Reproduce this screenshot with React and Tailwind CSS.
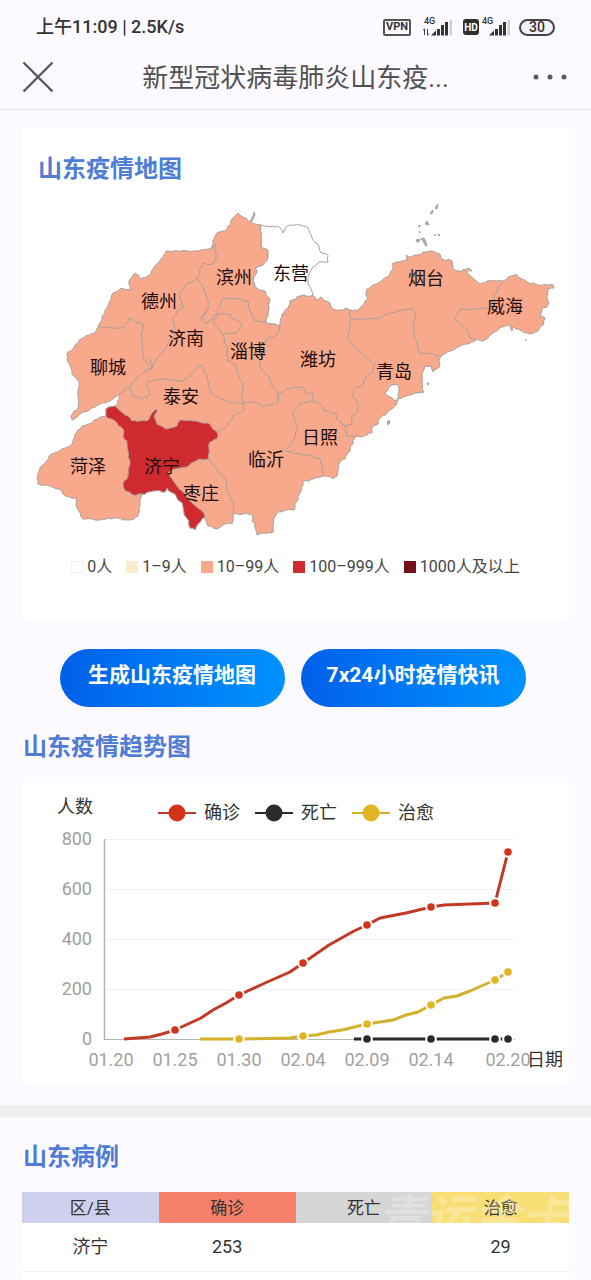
import React from "react";

const FONT = "font-['Roboto','Noto_Sans_CJK_SC',sans-serif]";

/* ---------- map data ---------- */

const PROVINCE =
  "238,212 241,215 246,217 249,221 252,217 254,211 255,213 251,222 261,224 262,247 268,249 268,256 263,264 255,267 257,272 253,280 257,287 265,290 270,298 269,307 268,315 266,321 272,323 280,324 282,313 288,307 290,300 300,295 313,294 316,299 321,296 325,300 330,302 333,308 343,309 346,307 350,309 358,309 364,303 368,298 366,294 367,288 380,281 390,273 393,268 392,263 400,261 407,258 406,254 409,256 417,254 423,251 435,251 440,253 442,258 452,260 453,268 460,271 468,267 472,270 467,271 475,279 480,283 487,280 503,280 508,276 516,273 520,277 527,281 535,283 548,284 553,284 554,287 548,288 547,295 549,302 547,306 542,307 540,315 545,317 544,323 538,330 530,333 522,330 516,328 513,326 512,330 510,324 502,326 492,333 483,340 477,338 468,343 460,345 450,350 441,355 439,360 440,365 433,371 431,365 425,365 422,373 422,380 424,391 415,392 403,396 398,398 397,403 392,408 387,412 380,417 378,423 373,425 372,432 367,434 362,436 356,435 353,443 348,452 345,458 340,461 337,475 333,478 323,475 303,481 300,492 295,503 295,508 287,509 278,511 274,517 273,527 272,532 263,532 257,534 255,523 252,520 252,513 243,513 233,513 232,523 225,523 217,528 208,525 205,516 198,523 195,529 190,527 189,520 184,513 183,505 175,493 167,487 165,491 153,490 142,493 139,507 138,515 130,519 122,519 117,517 100,519 83,518 77,507 76,497 65,495 59,488 50,485 38,483 37,478 40,467 52,453 62,448 70,445 75,433 82,425 92,422 100,416 106,415 106,408 115,405 118,403 119,393 113,398 100,403 80,413 72,419 71,415 78,407 78,393 79,380 72,373 68,361 67,353 78,342 83,337 95,332 99,323 107,307 113,292 120,288 131,288 129,280 135,272 138,274 141,278 148,275 157,263 166,250 177,250 193,250 208,248 210,248 217,232 227,229 232,218";

const DONGYING =
  "261,224 262,247 268,249 268,256 263,264 255,267 257,272 253,280 257,287 265,290 270,298 269,307 268,315 266,321 272,323 280,324 282,313 288,307 290,300 300,295 313,294 308,282 309,273 312,267 319,261 328,261 327,253 321,252 318,243 312,237 308,227 300,224 290,224 285,227 283,232 280,227 275,226 267,225";

const JINING =
  "106,408 115,405 123,412 128,415 132,420 140,420 147,420 152,412 157,408 157,411 154,416 157,423 167,428 177,425 180,419 193,420 208,422 217,431 217,438 210,441 209,448 209,458 203,459 200,458 187,466 175,468 168,472 172,478 177,485 185,493 193,503 202,510 205,516 198,523 195,529 190,527 189,520 184,513 183,505 175,493 167,487 165,491 153,490 142,493 133,494 124,488 123,482 128,475 128,468 130,463 128,450 127,440 123,435 123,428 115,420 106,415";

const BORDERS = [
  "99,326 112,327 123,327 129,317 137,322 143,323 141,333 143,357 152,367 145,370 130,385 119,393",
  "152,367 157,357 167,345 175,333 173,320 177,310 183,307 179,293 187,282 197,277 203,262 213,263 216,257 215,243 210,248",
  "197,277 203,287 207,297 209,307 202,315 203,320 208,322 217,313 230,313 233,318 242,323 237,332 223,333",
  "217,310 222,298 233,297 248,300 250,310 255,320 266,321",
  "217,313 213,323 223,333 227,350 227,360 235,363 238,373 243,382 242,393 243,403",
  "208,306 205,314 201,318",
  "280,324 278,333 265,340 260,350 260,360 262,370 270,377 272,385 278,392 278,402",
  "243,403 250,401 258,403 263,406 278,402 278,392 292,387 302,386 305,391 313,393 312,400 320,403 325,410 335,412 338,420 346,425",
  "312,400 300,403 292,413 298,425 295,437 285,450 310,455 320,457 323,467 323,475",
  "350,310 351,318 348,337 353,345 367,357 375,363 372,372 365,378 363,385 355,387 353,395 358,403 357,412 352,415 352,423 346,425 346,434 356,435",
  "351,318 377,318 397,310 412,307 416,313 413,323 415,337 420,353 430,352 440,355",
  "503,281 497,290 492,303 488,308 460,308 455,317 460,323 467,328 470,337 477,339",
  "130,385 132,395 143,398 150,393 147,382 160,378 183,380 202,363 207,377 210,392 220,397 230,401 243,403",
  "145,370 153,365 150,358",
  "243,403 243,410 233,415 225,427 217,431",
  "209,458 217,470 225,478 228,492 233,502 233,513",
];

const BAY = "390,385 398,384 399,390 397,398 398,400 394,399 388,395 385,391";

const ISLANDS = [
  "435,207 438,203 437,208", "430,212 433,209 432,213", "425,223 427,220 429,224",
  "418,225 420,224 420,226", "419,231 420,230 420,232", "434,234 436,234 435,235",
  "438,233 440,234 439,235", "416,239 420,238 419,241 417,241",
  "421,238 424,237 426,241 427,245 425,244 423,240", "387,421 389,419 390,422 388,424",
  "427,382 429,382 428,384", "525,339 526,339 526,340",
];

const LABELS = [
  ["滨州", 234, 283], ["东营", 291, 279], ["烟台", 426, 284], ["威海", 505, 312],
  ["德州", 159, 307], ["济南", 186, 344], ["淄博", 248, 357], ["潍坊", 318, 365],
  ["青岛", 394, 377], ["聊城", 108, 373], ["泰安", 181, 402], ["日照", 320, 443],
  ["临沂", 266, 465], ["菏泽", 88, 472], ["济宁", 162, 472], ["枣庄", 201, 499],
];

function noise(a, b) {
  const v = Math.sin(a * 12.9898 + b * 78.233) * 43758.5453;
  return v - Math.floor(v) - 0.5;
}

/* Splits every edge into small steps with a slight wobble, the same in either direction. */
function rough(points, closed) {
  const p = points.split(" ").map((s) => s.split(",").map(Number));
  const n = closed ? p.length : p.length - 1;
  let d = `M${p[0][0]} ${p[0][1]}`;
  for (let i = 0; i < n; i++) {
    const a = p[i];
    const b = p[(i + 1) % p.length];
    const steps = Math.max(1, Math.round(Math.hypot(b[0] - a[0], b[1] - a[1]) / 3));
    for (let k = 1; k <= steps; k++) {
      const x = a[0] + ((b[0] - a[0]) * k) / steps;
      const y = a[1] + ((b[1] - a[1]) * k) / steps;
      const w = k === steps ? 0 : 2;
      const rx = Math.round(x * 10);
      const ry = Math.round(y * 10);
      d += `L${(x + noise(rx, ry) * w).toFixed(1)} ${(y + noise(ry, rx) * w).toFixed(1)}`;
    }
  }
  return closed ? d + "Z" : d;
}

function ShandongMap() {
  return (
    <svg viewBox="22 190 547 355" className="block w-full" role="img" aria-label="山东疫情地图">
      <g stroke="#a8a09d" strokeWidth="1" strokeLinejoin="round">
        <path d={rough(PROVINCE, true)} fill="#f8a98b" />
        <path d={rough(DONGYING, true)} fill="#ffffff" />
        {BORDERS.map((b) => (
          <path key={b} d={rough(b, false)} fill="none" />
        ))}
        <path d={rough(JINING, true)} fill="#cf2a30" />
        <path d={rough(BAY, true)} fill="#ffffff" />
        {ISLANDS.map((b) => (
          <polygon key={b} points={b} fill="#b5b0ae" />
        ))}
      </g>
      <g fontSize="18" fill="#1c0b0b" textAnchor="middle">
        {LABELS.map(([name, x, y]) => (
          <text key={name} x={x} y={y}>{name}</text>
        ))}
      </g>
    </svg>
  );
}

/* ---------- trend chart ---------- */

const SERIES = [
  {
    name: "确诊", color: "#d3331a", line: "#c23a26", lx: 177,
    path: "124,1039 150,1037 162,1034 175,1030 188,1024 201,1018 213,1010 226,1003 239,995 265,983 290,972 303,963 329,945 354,931 367,925 380,918 406,913 431,907 444,905 470,904 495,903 508,852",
    dots: [[175, 1030], [239, 995], [303, 963], [367, 925], [431, 907], [495, 903], [508, 852]],
  },
  {
    name: "死亡", color: "#2b2b2b", line: "#2b2b2b", lx: 274,
    path: "354,1039 367,1039 431,1039 495,1039 508,1039",
    dots: [[367, 1039], [431, 1039], [495, 1039], [508, 1039]],
  },
  {
    name: "治愈", color: "#e2b524", line: "#d3b12c", lx: 371,
    path: "200,1039 239,1039 290,1038 303,1036 316,1035 329,1032 342,1030 367,1024 393,1020 406,1015 418,1012 431,1005 444,998 457,996 470,991 495,980 508,972",
    dots: [[239, 1039], [303, 1036], [367, 1024], [431, 1005], [495, 980], [508, 972]],
  },
];
const ROWS = [[800, 839], [600, 889], [400, 939], [200, 989], [0, 1039]];
const DATES = [["01.20", 111], ["01.25", 175], ["01.30", 239], ["02.04", 303], ["02.09", 367], ["02.14", 431], ["02.20", 508]];

function TrendChart() {
  return (
    <svg viewBox="22 783 547 300" className="block w-full" role="img" aria-label="山东疫情趋势图" fontSize="18">
      {ROWS.map(([v, y]) => (
        <g key={v}>
          <line x1="105" x2="515" y1={y + 0.5} y2={y + 0.5} stroke={v === 0 ? "#b4b4b4" : "#f1f1f1"} />
          <text x="92" y={y + 6} textAnchor="end" fill="#a0a0a0">{v}</text>
        </g>
      ))}
      <line x1="104.5" x2="104.5" y1="839" y2="1040" stroke="#b4b4b4" strokeWidth="1.5" />
      {DATES.map(([d, x]) => (
        <text key={d} x={x} y="1066" textAnchor="middle" fill="#a0a0a0">{d}</text>
      ))}
      <g fill="#333333">
        <text x="57" y="813">人数</text>
        <text x="527" y="1066">日期</text>
      </g>
      {SERIES.map((s) => (
        <g key={s.name}>
          <line x1={s.lx - 19} x2={s.lx + 19} y1="813" y2="813" stroke={s.line} strokeWidth="2" />
          <circle cx={s.lx} cy="813" r="8.5" fill={s.color} />
          <text x={s.lx + 27} y="819" fill="#333333">{s.name}</text>
          <polyline points={s.path} fill="none" stroke={s.line} strokeWidth="3" strokeLinejoin="round" />
          {s.dots.map(([x, y]) => (
            <circle key={x} cx={x} cy={y} r="4.8" fill={s.color} stroke="#ffffff" strokeWidth="2" />
          ))}
        </g>
      ))}
    </svg>
  );
}

/* ---------- status bar ---------- */

function Signal({ arrows }) {
  return (
    <svg viewBox="0 0 32 20" className="h-5 w-8" aria-hidden="true">
      <text x="1" y="7" fontSize="9" fontWeight="500" fill="#333">4G</text>
      {arrows && (
        <path d="M1.5 12v6M0 13.5l1.5-2M4.5 18v-6M6 16.500l-1.500 2" stroke="#444" strokeWidth="1" fill="none" />
      )}
      <g fill="#333">
        <path d="M8 18.500l5-5v5z" />
        <rect x="14" y="12" width="3" height="6.500" />
        <rect x="18" y="8" width="3" height="10.500" />
        <rect x="22" y="5" width="3" height="13.500" />
        <rect x="26.500" y="3" width="2.500" height="15.500" fill="#cfccd2" />
      </g>
    </svg>
  );
}

function StatusBar() {
  return (
    <div className="flex h-11 items-center justify-between pt-2.5 pr-9 pl-9 text-[#333]">
      <span className="text-lg font-medium">上午11:09 | 2.5K/s</span>
      <div className="flex items-center">
        <span className="mr-3 flex h-[17px] items-center rounded-[2px] border-2 border-[#555] px-px text-[11px] font-bold">VPN</span>
        <Signal arrows />
        <span className="ml-2 flex h-4 w-4 items-center justify-center rounded-[3px] bg-[#2f2f2f] text-[10px] font-bold text-white">HD</span>
        <span className="mr-1.5 ml-0.5 flex"><Signal /></span>
        <span className="flex h-[17px] w-9 items-center justify-center rounded-full border-2 border-[#444] bg-[#f4f1f7] text-sm font-medium">30</span>
      </div>
    </div>
  );
}

function NavBar() {
  return (
    <header className="flex h-[66px] items-center justify-between border-b border-[#e6e3e8] pr-6 pl-[22px]">
      <button type="button" aria-label="关闭" className="flex">
        <svg viewBox="0 0 32 32" className="h-8 w-8" aria-hidden="true">
          <path d="M1.500 1.500L30.500 30.500M30.500 1.500L1.500 30.500" stroke="#5a585c" strokeWidth="2.400" fill="none" />
        </svg>
      </button>
      <h1 className="pt-1 pl-1 text-[26px] text-[#515053]">新型冠状病毒肺炎山东疫...</h1>
      <button type="button" aria-label="更多" className="flex">
        <svg viewBox="0 0 34 8" className="h-2 w-[34px]" fill="#5a585c" aria-hidden="true">
          <circle cx="3" cy="4" r="2.500" />
          <circle cx="17" cy="4" r="2.500" />
          <circle cx="31" cy="4" r="2.500" />
        </svg>
      </button>
    </header>
  );
}

const LEGEND = [
  ["0人", "bg-white border border-[#f1f1f1]"],
  ["1–9人", "bg-[#fdebcf]"],
  ["10–99人", "bg-[#f8a98b]"],
  ["100–999人", "bg-[#cf2a30]"],
  ["1000人及以上", "bg-[#74101a]"],
];

function SectionTitle({ children }) {
  return <h2 className="text-2xl leading-8 font-bold text-[#4f7dd6]">{children}</h2>;
}

const PILL =
  "h-[58px] w-[225px] rounded-full bg-linear-to-r from-[#0060ea] to-[#0092ff] pb-1 text-[21px] font-bold text-white";

export default function App() {
  return (
    <div className={`flex min-h-screen flex-col bg-[#fdfaff] ${FONT}`}>
      <StatusBar />
      <NavBar />

      <main className="flex grow flex-col">
        <section className="mx-[22px] mt-[18px] bg-white pb-10">
          <div className="px-4 pt-[25px]"><SectionTitle>山东疫情地图</SectionTitle></div>
          <div className="pt-1.5"><ShandongMap /></div>
          <ul className="flex justify-center gap-3.5 pt-[9px] text-base leading-6 text-[#444]">
            {LEGEND.map(([name, swatch]) => (
              <li key={name} className="flex items-center gap-1 whitespace-nowrap">
                <span className={`h-3 w-3 ${swatch}`} />
                {name}
              </li>
            ))}
          </ul>
        </section>

        <div className="mt-[30px] flex justify-center gap-4 pr-1.5">
          <button type="button" className={PILL}>生成山东疫情地图</button>
          <button type="button" className={PILL}>7x24小时疫情快讯</button>
        </div>

        <section className="mx-[22px] mt-6 mb-[22px]">
          <div className="pl-px"><SectionTitle>山东疫情趋势图</SectionTitle></div>
          <div className="mt-5 bg-white"><TrendChart /></div>
        </section>

        <div className="h-3 bg-[#eeeeee]" />

        <section className="mx-[22px] flex grow flex-col pt-6">
          <div className="pl-px"><SectionTitle>山东病例</SectionTitle></div>
          <div className="relative mt-[19px]">
            <table className="w-full table-fixed bg-white text-center text-[#333]">
              <thead className="h-[31px] text-[17px] leading-6">
                <tr>
                  <th className="bg-[#cfcfee] font-normal">区/县</th>
                  <th className="bg-[#f6806a] font-normal">确诊</th>
                  <th className="bg-[#d6d6d6] font-normal">死亡</th>
                  <th className="bg-[#f8de74] font-normal">治愈</th>
                </tr>
              </thead>
              <tbody>
                <tr className="h-12 border-b border-[#f0f0f0] text-lg">
                  <td>济宁</td>
                  <td>253</td>
                  <td></td>
                  <td>29</td>
                </tr>
              </tbody>
            </table>
            <span aria-hidden="true" className="pointer-events-none absolute top-0.5 right-0 text-5xl leading-[50px] font-bold whitespace-nowrap text-white/25 italic">青运金卡</span>
          </div>
          <div className="grow bg-white" />
        </section>
      </main>
    </div>
  );
}
